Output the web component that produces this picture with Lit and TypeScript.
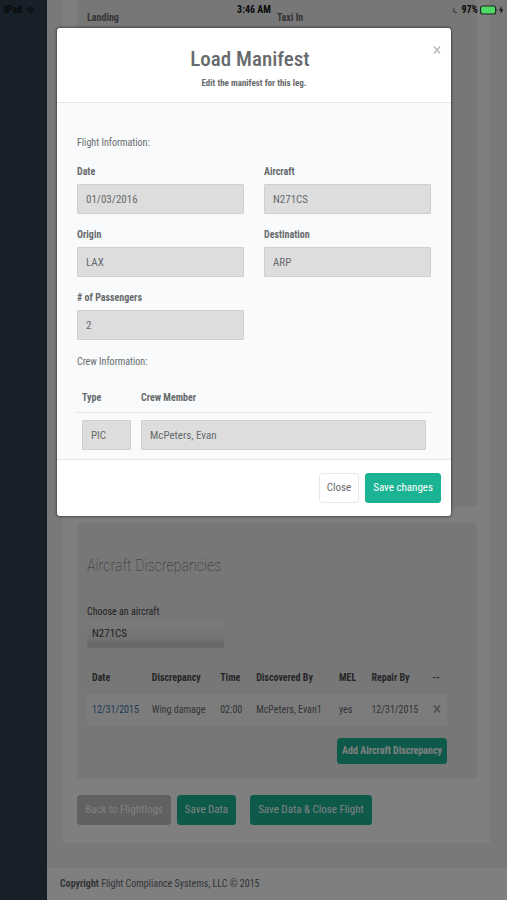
import { LitElement, html, css } from "lit";
import { customElement, state } from "lit/decorators.js";

interface Discrepancy {
  date: string;
  text: string;
  time: string;
  by: string;
  mel: string;
  repair: string;
}

@customElement("app-root")
export class AppRoot extends LitElement {
  @state() private discrepancies: Discrepancy[] = [
    { date: "12/31/2015", text: "Wing damage", time: "02:00", by: "McPeters, Evan1", mel: "yes", repair: "12/31/2015" },
  ];

  private fields = [
    { id: "date", label: "Date", value: "01/03/2016" },
    { id: "aircraft", label: "Aircraft", value: "N271CS" },
    { id: "origin", label: "Origin", value: "LAX" },
    { id: "destination", label: "Destination", value: "ARP" },
    { id: "passengers", label: "# of Passengers", value: "2" },
  ];

  static styles = css`
    :host {
      display: block;
      position: relative;
      min-height: 100vh;
      font-family: "Roboto Condensed", Roboto, "Liberation Sans", sans-serif;
      font-size: 10px;
      line-height: 16px;
      color: #676a6c;
    }
    * { box-sizing: border-box; }
    button, input, select { font: inherit; color: inherit; margin: 0; }
    p, h1, h2 { margin: 0; }
    table { border-collapse: collapse; width: 100%; }
    th, td { text-align: left; padding: 0; }

    .page { display: flex; min-height: 100vh; background: #f3f3f4; }
    .side { flex: none; width: 47px; background: #2f4050; }
    .content { flex: 1; min-width: 0; display: flex; flex-direction: column; }
    .box {
      flex: 1;
      display: flex;
      flex-direction: column;
      margin: 0 17px 24px 16px;
      padding: 0 13px 18px 14px;
      background: #fff;
    }
    .panel { background: #eee; border-radius: 4px; padding: 10px; }
    .times { flex: 1; display: grid; grid-template-columns: 1fr 1fr; font-weight: bold; }
    .discrepancies { margin: 16px 0; padding: 27px 30px 15px 10px; }
    .discrepancies h2 { font-size: 16px; line-height: 32px; font-weight: 100; color: #5c5f61; }
    .choose { display: block; margin-top: 22px; color: #444; }
    .pick {
      appearance: none;
      display: block;
      width: 137px;
      height: 28px;
      padding: 0 5px;
      border: 0;
      border-radius: 2px;
      color: #444;
      font-size: 11px;
      background: linear-gradient(#f8f8f8, #e4e4e4 70%, #d4d4d4 82%, #d2d2d2);
    }
    .log { margin-top: 14px; table-layout: fixed; }
    .log th { height: 32px; color: #4c4f51; }
    .log td { height: 32px; background: #f9f9f9; }
    .log th:first-child, .log td:first-child { padding-left: 5px; }
    .log a { color: #337ab7; text-decoration: none; }
    .c-date { width: 18%; }
    .c-text { width: 19%; }
    .c-time { width: 10%; }
    .c-by { width: 23%; }
    .c-mel { width: 9%; }
    .c-repair { width: 17%; }
    .plain { background: none; border: 0; padding: 0; color: #999; }
    .icon { display: block; }
    .add { display: flex; justify-content: flex-end; margin-top: 12px; }
    .btn {
      height: 30px;
      padding: 0 7px;
      border: 1px solid #1ab394;
      border-radius: 3px;
      background: #1ab394;
      color: #fff;
      font-size: 11px;
      white-space: nowrap;
    }
    .small { height: 26px; padding: 0 4px; font-size: 10px; font-weight: bold; }
    .grey { background: #c2c2c2; border-color: #c2c2c2; }
    .white { background: #fff; border-color: #e7eaec; color: #676a6c; }
    .actions { display: flex; gap: 6px; }
    .apart { margin-left: 8px; }
    .foot { padding: 8px 13px; border-top: 1px solid #e7eaec; background: #fff; }

    .shade { position: absolute; inset: 0; background: rgba(0, 0, 0, 0.5); }
    .status {
      position: absolute;
      inset: 2px 3px auto 4px;
      display: grid;
      grid-template-columns: 1fr auto 1fr;
      align-items: center;
      color: #0a0a0a;
      font-weight: bold;
    }
    .status span { display: flex; align-items: center; gap: 4px; }
    .status .end { justify-content: flex-end; gap: 2px; }
    .modal {
      position: absolute;
      inset: 28px 56px auto 57px;
      background: #fff;
      border-radius: 3px;
      box-shadow: 0 0 3px rgba(0, 0, 0, 0.8);
    }
    .head { position: relative; height: 75px; padding-top: 15px; text-align: center; font-weight: bold; font-size: 9px; border-bottom: 1px solid #e5e5e5; }
    .head h1 { padding-right: 8px; font-size: 21px; line-height: 32px; font-weight: 500; }
    .x { position: absolute; top: 18px; right: 10px; color: #bbb; }
    .body { padding: 32px 20px 9px 20px; background: #f8fafb; }
    .fields { display: grid; grid-template-columns: 1fr 1fr; gap: 13px 20px; margin: 13px 0 14px; }
    .field label { display: block; font-weight: bold; height: 20px; }
    .input {
      display: block;
      width: 100%;
      height: 30px;
      padding: 0 8px;
      border: 1px solid #cfcfcf;
      border-radius: 1px;
      background: #ddd;
      font-size: 11px;
    }
    .crew { margin-top: 20px; }
    .crew th { padding: 0 5px 6px; border-bottom: 1px solid #e0e2e3; }
    .crew td { padding: 7px 5px 0; }
    .crew th:first-child { width: 59px; }
    .end-bar { display: flex; justify-content: flex-end; gap: 6px; padding: 13px 10px; border-top: 1px solid #e5e5e5; }
  `;

  private cross(size: number) {
    return html`<svg class="icon" width=${size} height=${size} viewBox="0 0 8 8" fill="none" stroke="currentColor" stroke-width="1.5">
      <path d="M1 .5 7 7.5M7 .5 1 7.5" />
    </svg>`;
  }

  render() {
    return html`
      <div class="page">
        <nav class="side"></nav>
        <div class="content">
          <main class="box">
            <section class="panel times"><span>Landing</span><span>Taxi In</span></section>
            <section class="panel discrepancies">
              <h2>Aircraft Discrepancies</h2>
              <label class="choose" for="pick">Choose an aircraft</label>
              <select class="pick" id="pick"><option>N271CS</option></select>
              <table class="log">
                <thead>
                  <tr>
                    <th class="c-date">Date</th>
                    <th class="c-text">Discrepancy</th>
                    <th class="c-time">Time</th>
                    <th class="c-by">Discovered By</th>
                    <th class="c-mel">MEL</th>
                    <th class="c-repair">Repair By</th>
                    <th>--</th>
                  </tr>
                </thead>
                <tbody>
                  ${this.discrepancies.map(
                    (d) => html`<tr>
                      <td><a href="#">${d.date}</a></td>
                      <td>${d.text}</td>
                      <td>${d.time}</td>
                      <td>${d.by}</td>
                      <td>${d.mel}</td>
                      <td>${d.repair}</td>
                      <td><button class="plain" aria-label="Remove">${this.cross(8)}</button></td>
                    </tr>`
                  )}
                </tbody>
              </table>
              <div class="add"><button class="btn small">Add Aircraft Discrepancy</button></div>
            </section>
            <div class="actions">
              <button class="btn grey">Back to Flightlogs</button>
              <button class="btn">Save Data</button>
              <button class="btn apart">Save Data &amp; Close Flight</button>
            </div>
          </main>
          <footer class="foot"><b>Copyright</b> Flight Compliance Systems, LLC © 2015</footer>
        </div>
      </div>
      <div class="shade"></div>
      <div class="status">
        <span>iPad
          <svg class="icon" width="9" height="7" viewBox="0 0 9 7" fill="none" stroke="currentColor" stroke-width="1.2">
            <path d="M.5 2.5Q4.500-.8 8.500 2.500M2 4.300Q4.500 2.200 7 4.300" /><circle cx="4.500" cy="6" r=".5" />
          </svg>
        </span>
        <span>3:46 AM</span>
        <span class="end">
          <svg class="icon" width="8" height="8" viewBox="0 0 8 8"><path d="M3 1A3.500 3.500 0 0 0 6.500 6.500A3.300 3.300 0 1 1 3 1Z" fill="#444" /></svg>
          97%
          <svg class="icon" width="24" height="10" viewBox="0 0 24 10">
            <rect x=".6" y="1" width="15" height="8" rx="2" fill="#4cd964" stroke="#222" stroke-width="1.100" />
            <path d="M16.500 3.500q1.500 1.500 0 3z" fill="#222" />
            <path d="M22 1 18.800 5.600H21L20.200 9 23.500 4.400H21.300Z" fill="#111" />
          </svg>
        </span>
      </div>
      <div class="modal" role="dialog" aria-labelledby="title">
        <header class="head">
          <h1 id="title">Load Manifest</h1>
          <p>Edit the manifest for this leg.</p>
          <button class="plain x" aria-label="Close">${this.cross(8)}</button>
        </header>
        <div class="body">
          <p>Flight Information:</p>
          <div class="fields">
            ${this.fields.map(
              (f) => html`<div class="field">
                <label for=${f.id}>${f.label}</label>
                <input class="input" id=${f.id} .value=${f.value} readonly />
              </div>`
            )}
          </div>
          <p>Crew Information:</p>
          <table class="crew">
            <thead><tr><th>Type</th><th>Crew Member</th></tr></thead>
            <tbody>
              <tr>
                <td><input class="input" aria-label="Type" .value=${"PIC"} readonly /></td>
                <td><input class="input" aria-label="Crew Member" .value=${"McPeters, Evan"} readonly /></td>
              </tr>
            </tbody>
          </table>
        </div>
        <footer class="end-bar">
          <button class="btn white">Close</button>
          <button class="btn">Save changes</button>
        </footer>
      </div>
    `;
  }
}
